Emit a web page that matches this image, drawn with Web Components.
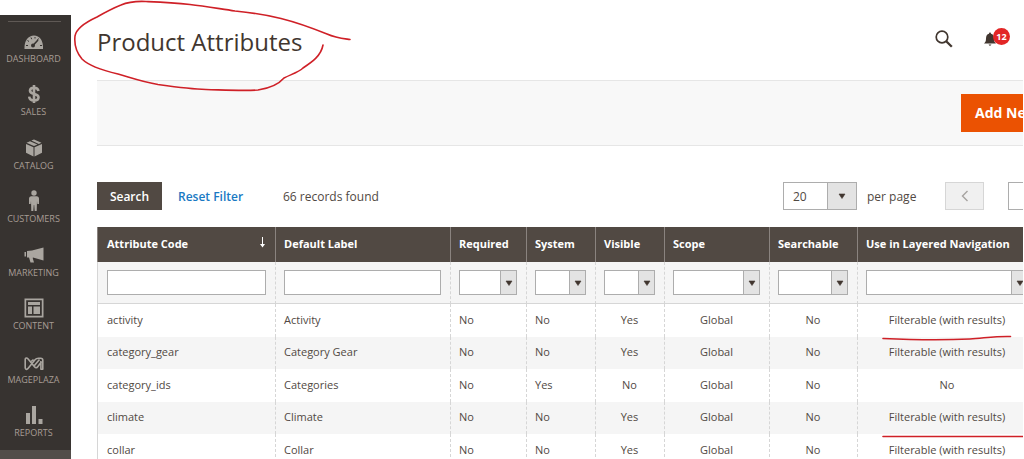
<!DOCTYPE html>
<html lang="en">
<head>
<meta charset="utf-8">
<title>Product Attributes</title>
<style>
  body { margin: 0; font-family: "Open Sans", "Noto Sans", sans-serif; color: #514943; background: #fff; }
</style>
</head>
<body>
<admin-page></admin-page>
<script>
const define = (name, html, setup) => {
  const template = document.createElement('template');
  template.innerHTML = '<style>*{box-sizing:border-box}</style>' + html;
  customElements.define(name, class extends HTMLElement {
    constructor() {
      super();
      this.attachShadow({ mode: 'open' }).append(template.content.cloneNode(true));
    }
    connectedCallback() { if (setup) setup(this, this.shadowRoot); }
  });
};

define('drop-down', `
  <style>
    :host { display: grid; height: 25px; --arrow: 17px; font-size: 12px; }
    select, .arrow { grid-area: 1 / 1; }
    select { appearance: none; width: 100%; height: 100%; min-width: 0; margin: 0; padding: 0 9px; border: 1px solid #adadad;
      border-radius: 0; background: #fff; color: #514943; font: inherit; }
    .arrow { justify-self: end; width: var(--arrow); display: grid; place-items: center; pointer-events: none;
      background: #e3e3e3; border: 1px solid #adadad; }
    .arrow svg { display: block; width: 8px; height: 6px; }
  </style>
  <select></select>
  <span class="arrow"><svg viewBox="0 0 8 6"><path d="M1 1h6L4 5.5z" fill="#41362f" stroke="#41362f" stroke-width=".6"/></svg></span>
`, (host, root) => {
  const select = root.querySelector('select');
  select.setAttribute('aria-label', host.getAttribute('label'));
  select.add(new Option(host.getAttribute('value') || ''));
});

define('nav-item', `
  <style>
    :host { display: block; height: 53px; }
    :host(:nth-of-type(even)) { height: 54px; }
    a { display: flex; flex-direction: column; align-items: center; justify-content: flex-end; height: 43px;
      color: #a79d95; text-decoration: none; font-size: 9px; line-height: 12px; margin-right: 4px; text-transform: uppercase; }
    ::slotted(svg) { display: block; width: 22px; height: 22px; margin-bottom: 1px; fill: #aaa6a0; }
  </style>
  <a href="#"><slot></slot><slot name="label"></slot></a>
`);

define('side-nav', `
  <style>
    :host { display: block; width: 71px; flex: none; margin-top: 15px; background: #373330; }
    nav { display: flex; flex-direction: column; }
    hr { width: 53px; margin: 6px 0 0 8px; border: 0; border-top: 1px solid #5f5955; }
    .active { height: 40px; background: #524d49; }
  </style>
  <nav aria-label="Main">
    <hr>
    <nav-item><svg viewBox="0 0 22 22"><path d="M1.500 19C1 10.500 5.500 5.500 11 5.500s9.500 5 9 13.500z"/><g stroke="#373330" stroke-width="1" fill="none"><path d="M3 15.500h2M4.500 10.500l1.500 1M8 7.500l.7 1.700M12 7v1.500M15.500 8.500l-1 1.500M17 15.500h2" /><path d="M9.500 16l5.500-6" stroke-width="1.600"/></g><circle cx="10" cy="15.500" r="2" fill="#373330"/></svg><span slot="label">Dashboard</span></nav-item>
    <nav-item><svg viewBox="0 0 22 22"><path d="M15.500 8C15 5.500 13 4.700 11 4.700c-2.500 0-4 1.200-4 3C7 12 15.500 10 15.500 14.300c0 2-1.800 3.200-4.500 3.200S6.500 16.500 6.200 13.700M11 2v18" fill="none" stroke="#aaa6a0" stroke-width="2.600"/></svg><span slot="label">Sales</span></nav-item>
    <nav-item><svg viewBox="0 0 22 22"><path d="M3 7l7.500 3.200V19.500L3 15.700zM19 7l-7.500 3.200V19.500l7.500-3.800zM3.500 5.800L7 4.200l7.500 3.300-3.500 1.600zM8.300 3.600L11 2.500l7.500 3.300-2.700 1.100z"/></svg><span slot="label">Catalog</span></nav-item>
    <nav-item><svg viewBox="0 0 22 22"><circle cx="11" cy="3" r="2.700"/><path d="M8 6.200h6q2 .2 2 2.300v5.500h-1.700L14 11l-.3 10h-2l-.5-6h-.4l-.5 6h-2L8 11l-.3 3H6V8.500q0-2.100 2-2.300z"/></svg><span slot="label">Customers</span></nav-item>
    <nav-item><svg viewBox="0 0 22 22"><path d="M20.500 3.500v13L10 13.500l-.3.500L11 18.500H7.500L6 13.500H4V7l5-.5zM1.500 8H3v4.500H1.500z"/></svg><span slot="label">Marketing</span></nav-item>
    <nav-item><svg viewBox="0 0 22 22"><path d="M1.500 1.500h19v19h-19zM3.200 3.200v15.600h15.600V3.200zM5 5h12v3H5zM5 9.500h4V17H5zM10.500 9.500H17V17h-6.500z" fill-rule="evenodd"/></svg><span slot="label">Content</span></nav-item>
    <nav-item><svg viewBox="0 0 22 22"><path d="M2.200 17V8.500c0-1.600 1.600-2 2.700-.8l6.600 8c1.200 1.500 2.500 1 3.200 0l4-5.200M2.200 17c.3 2 2 1.600 3 .2l6.800-8.400c1-1.300 2-1.600 3.500-1.600h2.200c1.500 0 2.100.7 2.100 2v9h-1.900V10M8 10.500l2.500-2M11 15l5.500-6.500" fill="none" stroke="#aaa6a0" stroke-width="1.600" stroke-linejoin="round"/></svg><span slot="label">Mageplaza</span></nav-item>
    <nav-item><svg viewBox="0 0 22 22"><path d="M3 9h4v11H3zM9 2h4v18H9zM15.500 15h4v5h-4z"/></svg><span slot="label">Reports</span></nav-item>
    <div class="active"></div>
  </nav>
`);

define('page-header', `
  <style>
    :host { display: flex; align-items: center; height: 80px; padding: 4px 13px 0 0; }
    h1 { flex: 1; margin: 0; font-size: 24px; font-weight: 400; line-height: 32px; color: #41362f; }
    button { display: block; border: 0; padding: 0; background: none; color: #41362f; }
    svg { display: block; }
    .find { margin: 0 30px 6px 0; }
    .bell { display: flex; position: relative; width: 27px; height: 24px; margin-bottom: 6px; align-items: center; }
    .count { position: absolute; right: 0; top: 1px; width: 17px; height: 17px; border-radius: 50%; background: #e22626; color: #fff;
      font: 700 9px/17px "Open Sans", sans-serif; text-align: center; }
  </style>
  <h1>Product Attributes</h1>
  <button class="find" aria-label="Search"><svg width="18" height="18" viewBox="0 0 18 18" fill="none" stroke="currentColor"><circle cx="7" cy="7" r="5.800" stroke-width="1.700"/><path d="M11.200 11.200l5.600 5.600" stroke-width="2.300"/></svg></button>
  <button class="bell" aria-label="Notifications"><svg width="14" height="16" viewBox="0 0 14 16" fill="currentColor"><path d="M1 12.500c1.500-1.200 2-2.500 2-5C3 5 4 3.200 6 2.800 6 1 8 1 8 2.800c2 .4 3 2.200 3 4.700s.5 3.800 2 5zM5.500 13.500h3L7 15z"/></svg><span class="count">12</span></button>
`);

define('page-actions', `
  <style>
    :host { display: flex; justify-content: flex-end; height: 66px; padding: 13px 0; background: #f8f8f8;
      border: solid #e6e6e6; border-width: 1px 0; }
    button { width: 62px; height: 38px; padding: 0 0 2px 14px; border: 0; background: #eb5202; color: #fff; overflow: hidden;
      text-align: left; white-space: nowrap; font: 700 14px "Open Sans", sans-serif; }
  </style>
  <button>Add Ne</button>
`);

define('grid-controls', `
  <style>
    :host { display: flex; align-items: center; height: 28px; margin: 36px 0 17px; font-size: 12px; white-space: nowrap; }
    .search { width: 65px; height: 28px; padding: 0; border: 0; background: #514943; color: #fff; font: 600 12px "Open Sans", sans-serif; }
    a { margin-left: 16px; color: #1979c3; font-weight: 600; text-decoration: none; width: 105px; }
    .total { flex: 1; }
    drop-down { width: 74px; height: 28px; --arrow: 30px; }
    .per { width: 88px; padding-left: 10px; }
    .prev { display: grid; place-items: center; width: 39px; height: 28px; padding: 0; margin-right: 24px; background: #f0f0f0; border: 1px solid #d6d6d6; }
    input { width: 15px; height: 28px; padding: 0; border: 1px solid #adadad; border-right: 0; border-radius: 0; background: #fff; }
  </style>
  <button class="search">Search</button>
  <a href="#">Reset Filter</a>
  <span class="total">66 records found</span>
  <drop-down label="Records per page" value="20"></drop-down>
  <span class="per">per page</span>
  <button class="prev" aria-label="Previous page"><svg width="8" height="12" viewBox="0 0 8 12"><path d="M6.500 1L1.500 6l5 5" fill="none" stroke="#a6a3a0" stroke-width="1.400"/></svg></button>
  <input type="text" aria-label="Page">
`);

const columns = [
  ['Attribute Code', 178], ['Default Label', 175], ['Required', 76], ['System', 69],
  ['Visible', 69], ['Scope', 105], ['Searchable', 88], ['Use in Layered Navigation', 180]
];
const filterable = 'Filterable (with results)';
const rows = [
  ['activity', 'Activity', 'No', 'No', 'Yes', 'Global', 'No', filterable],
  ['category_gear', 'Category Gear', 'No', 'No', 'Yes', 'Global', 'No', filterable],
  ['category_ids', 'Categories', 'No', 'Yes', 'No', 'Global', 'No', 'No'],
  ['climate', 'Climate', 'No', 'No', 'Yes', 'Global', 'No', filterable],
  ['collar', 'Collar', 'No', 'No', 'Yes', 'Global', 'No', filterable]
];

define('attribute-grid', `
  <style>
    :host { display: block; }
    table { width: 100%; min-width: 940px; table-layout: fixed; border-collapse: separate; border-spacing: 0; font-size: 11px; line-height: 16px; }
    th, td { padding: 0 9px 0 8px; text-align: left; white-space: nowrap; border-left: 1px dashed #d6d6d6; }
    th:first-child, td:first-child { padding-left: 9px; }
    td:first-child { border-left-style: solid; }
    th { height: 35px; padding-bottom: 2px; background: #514943; color: #fff; font-weight: 700; border-left: 1px solid #8a837f; }
    th span { display: flex; justify-content: space-between; align-items: center; }
    .filters td { height: 42px; background: #f5f5f5; border-bottom: 1px solid #d6d6d6; }
    .data td { height: 33px; padding-bottom: 2px; }
    .data:nth-child(even) td { height: 32px; background: #f5f5f5; }
    .data td:nth-child(n+5) { text-align: center; }
    input { display: block; width: 100%; height: 25px; padding: 0 6px; border: 1px solid #adadad; border-radius: 0; background: #fff; font: inherit; }
  </style>
  <table>
    <colgroup>${columns.map(c => `<col style="width:${c[1]}px">`).join('')}</colgroup>
    <thead>
      <tr>${columns.map((c, i) => `<th scope="col"><span>${c[0]}${i ? '' : '<svg width="7" height="14" viewBox="0 0 7 14"><path d="M3.500 0v8" stroke="#fff"/><path d="M1 7h5L3.500 10.500z" fill="#fff"/></svg>'}</span></th>`).join('')}</tr>
      <tr class="filters">${columns.map((c, i) => `<td>${i < 2 ? `<input type="text" aria-label="${c[0]}">` : `<drop-down label="${c[0]}"></drop-down>`}</td>`).join('')}</tr>
    </thead>
    <tbody>${rows.map(r => `<tr class="data">${r.map(t => `<td>${t}</td>`).join('')}</tr>`).join('')}</tbody>
  </table>
`);

define('pen-marks', `
  <style>
    :host { position: absolute; inset: 0; pointer-events: none; }
    svg { display: block; width: 1023px; height: 459px; }
  </style>
  <svg viewBox="0 0 1023 459" fill="none" stroke="#cf2027" stroke-width="1.600" stroke-linecap="round" stroke-linejoin="round" aria-hidden="true">
    <path d="M350 39.500C343 38.500 336 38 327 34C312 28 299 23 281 18.500C263 14 250 12.500 235 11C218 8.500 204 6 190 4.500C172 2.500 158 2 146 1.500C135 1 128 2 121 5C111 9 104 13 97 17C84 23 76 30 75 36C74 45 76 52 82 59C89 66 101 70 118 74C132 78 143 82 158 84.500C176 87 190 89 206 89.500C225 90 244 91 258 90C268 88.500 278 85 284 78C292 74 299 72 303 68C312 62 321 56 323 45"/>
    <path d="M883 338.500C915 340 950 340 970 339C985 338 997 336 1010.500 336.500"/>
    <path d="M883 436.500H1023"/>
  </svg>
`);

define('admin-page', `
  <style>
    :host { display: flex; position: relative; height: 100vh; overflow: hidden; padding-right: 1px; }
    main { flex: 1; min-width: 0; padding-left: 26px; overflow: hidden; }
  </style>
  <side-nav></side-nav>
  <main>
    <page-header></page-header>
    <page-actions></page-actions>
    <grid-controls></grid-controls>
    <attribute-grid></attribute-grid>
  </main>
  <pen-marks></pen-marks>
`);
</script>
</body>
</html>
